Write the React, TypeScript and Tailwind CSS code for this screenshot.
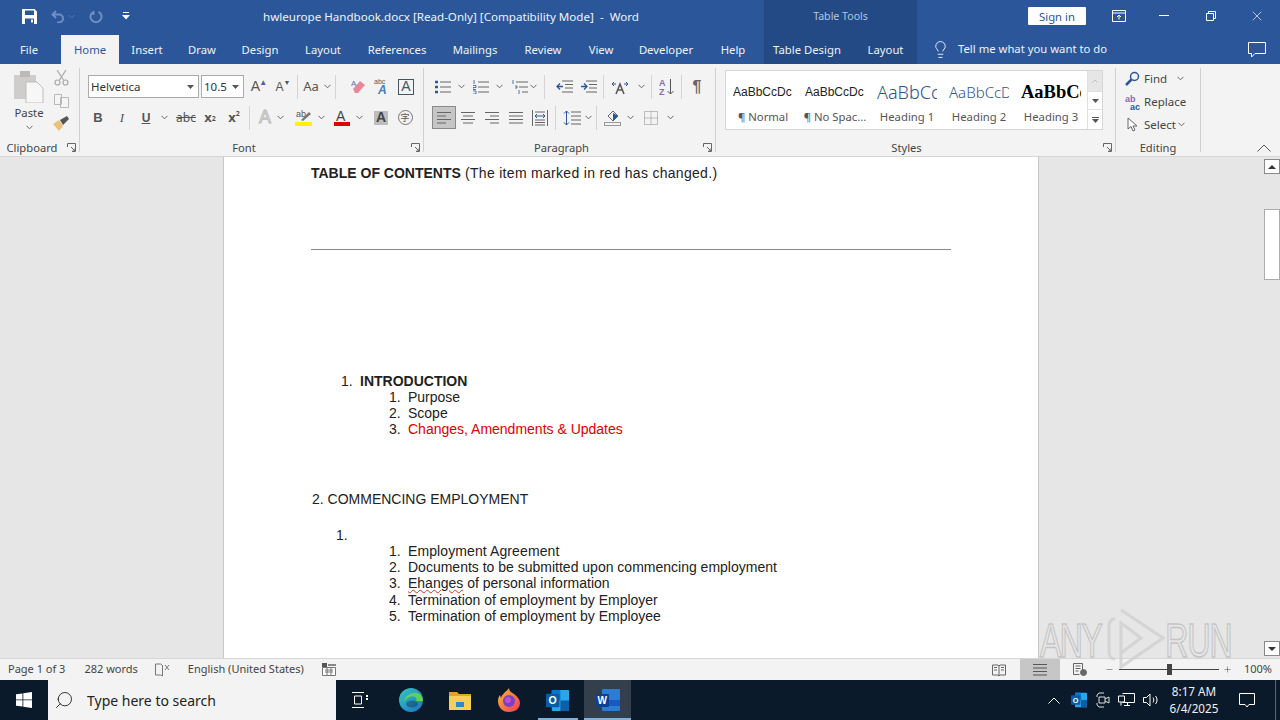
import React from 'react';
import { ChevronUp, Lightbulb, Minus, Plus, Search, X } from 'lucide-react';

const Chev: React.FC<{ className?: string }> = ({ className = 'w-3' }) => (
  <span className={`${className} flex justify-center shrink-0`}>
    <svg width="7" height="5" viewBox="0 0 7 5" fill="none" stroke="#666" strokeWidth="1">
      <path d="M0.5 0.8 3.5 3.8 6.5 0.8" />
    </svg>
  </span>
);

const Sep = ({ className = '' }: { className?: string }) => (
  <span className={`w-px h-[24px] bg-[#d4d4d4] shrink-0 ${className}`} />
);

const GroupSep = () => <div className="w-px my-[4px] bg-[#d0d0d0] shrink-0" />;

const Cell: React.FC<{ children: React.ReactNode; className?: string }> = ({ children, className = '' }) => (
  <span className={`w-6 h-[23px] flex items-center justify-center shrink-0 ${className}`}>{children}</span>
);

const Launcher = () => (
  <svg className="absolute right-[3px] top-[4px]" width="9" height="9" viewBox="0 0 9 9" fill="none" stroke="#666">
    <path d="M.5 4V.5h8v8H5M4 4l4 4M8 5.5V8H5.5" />
  </svg>
);

const GroupLabel: React.FC<{ children: React.ReactNode; className?: string }> = ({ children, className = '' }) => (
  <div className={`relative h-[17px] text-center text-[11.2px] leading-[17px] text-[#444] ${className}`}>
    {children}
    <Launcher />
  </div>
);

const Lines: React.FC<{ rows: [number, number][]; color?: string }> = ({ rows, color = '#666' }) => (
  <svg width="16" height="14" viewBox="0 0 16 14" stroke={color}>
    {rows.map(([x1, x2], i) => (
      <path key={i} d={`M${x1} ${1.5 + i * 3.5}H${x2}`} />
    ))}
  </svg>
);

const titleTabs = [
  { label: 'Insert', w: 'w-[56px]' },
  { label: 'Draw', w: 'w-[54px]' },
  { label: 'Design', w: 'w-[62px]' },
  { label: 'Layout', w: 'w-[64px]' },
  { label: 'References', w: 'w-[84px]' },
  { label: 'Mailings', w: 'w-[72px]' },
  { label: 'Review', w: 'w-[64px]' },
  { label: 'View', w: 'w-[52px]' },
  { label: 'Developer', w: 'w-[78px]' },
  { label: 'Help', w: 'w-[56px]' },
];

const TitleBar = () => (
  <div className="h-[36px] flex bg-[#2b579a] text-white">
    <div className="w-[263px] flex items-center shrink-0">
      <svg className="ml-[22px] mb-[3px]" width="15" height="15" viewBox="0 0 15 15">
        <path fill="#fff" d="M0 0h12.5L15 2.5V15H0z" />
        <path fill="#2b579a" d="M3 1.5h9v4.5H3zM3 9.5h9V15H3z" />
        <path fill="#fff" d="M9 10.5h2v3H9z" />
      </svg>
      <svg className="ml-[14px] mb-[3px]" width="14" height="13" viewBox="0 0 14 13" fill="none" stroke="#6f8fc0" strokeWidth="2">
        <path d="M5 1 1.5 4.5 5 8M2 4.5h6a4 4 0 0 1 0 8H6" />
      </svg>
      <svg className="ml-[3px] mb-[3px]" width="7" height="5" viewBox="0 0 7 5" fill="none" stroke="#5878ad">
        <path d="M.5 1l3 3 3-3" />
      </svg>
      <svg className="ml-[14px] mb-[3px]" width="14" height="14" viewBox="0 0 14 14" fill="none" stroke="#6f8fc0" strokeWidth="2">
        <path d="M9.5 1.8a5.5 5.5 0 1 1-5 0M4.5 1v4" />
      </svg>
      <svg className="ml-[19px] mb-[3px]" width="8" height="9" viewBox="0 0 8 9" fill="#fff">
        <path d="M1 0h6v1H1zM0 3h8L4 7.5z" />
      </svg>
    </div>
    <div className="w-[501px] text-[11.6px] leading-[34px] whitespace-pre shrink-0 text-[#eef2f8]">
      hwleurope Handbook.docx [Read-Only] [Compatibility Mode]  -  Word
    </div>
    <div className="w-[153px] bg-[#234a85] text-center text-[10.6px] leading-[32px] text-[#b4c6e2] shrink-0">Table Tools</div>
    <div className="flex-1 flex items-center">
      <div className="ml-[111px] w-[58px] h-[18px] bg-white text-[#2b579a] text-[11.3px] leading-[19px] text-center rounded-[1px] mb-[4px]">
        Sign in
      </div>
      <svg className="ml-[26px] mb-[5px]" width="14" height="12" viewBox="0 0 14 12" fill="none" stroke="#fff">
        <path d="M.5.5h13v11H.5zM.5 3h13M7 9.5V5M5 7l2-2 2 2" />
      </svg>
      <span className="ml-[33px] w-[10px] h-px bg-white mb-[5px]" />
      <svg className="ml-[37px] mb-[5px]" width="10" height="10" viewBox="0 0 10 10" fill="none" stroke="#fff">
        <path d="M.5 2.5h7v7h-7zM2.5 2.5v-2h7v7h-2" />
      </svg>
      <X className="ml-[33px] mb-[5px] text-white" size={16} strokeWidth={1} />
    </div>
  </div>
);

const TabRow = () => (
  <div className="h-[28px] flex bg-[#2b579a] text-[11.3px] text-[#eef2f8] leading-[28px]">
    <div className="w-[58px] text-center">File</div>
    <div className="ml-[3px] w-[58px] -mt-px bg-[#f3f3f3] text-[#2b579a] text-center leading-[30px]">Home</div>
    {titleTabs.map((t) => (
      <div key={t.label} className={`${t.w} text-center`}>
        {t.label}
      </div>
    ))}
    <div className="ml-[3px] w-[153px] bg-[#234a85] flex">
      <div className="w-[86px] text-center">Table Design</div>
      <div className="ml-[4px] w-[63px] text-center">Layout</div>
    </div>
    <Lightbulb className="ml-[14px] mt-[4px] text-white" size={19} strokeWidth={1.1} />
    <div className="ml-[8px] leading-[26px]">Tell me what you want to do</div>
    <svg className="ml-auto mr-[14px] mt-[6px]" width="18" height="16" viewBox="0 0 18 16" fill="none" stroke="#fff">
      <path d="M.5.5h17v11H7l-3.5 3.5V11.5h-3z" />
    </svg>
  </div>
);

const Clipboard = () => (
  <div className="w-[79px] flex flex-col shrink-0">
    <div className="h-[75px] flex pt-[6px]">
      <div className="w-[58px] flex flex-col items-center">
        <svg width="32" height="33" viewBox="0 0 32 33">
          <rect x="1" y="5" width="22" height="24" fill="#cfcdcb" />
          <rect x="7" y="1" width="10" height="6" fill="#bcbab8" />
          <path d="M13 12h11l6 6v15H13z" fill="#f7f7f7" stroke="#bdbdbd" />
        </svg>
        <div className="text-[11.3px] leading-[16px] text-[#444] mt-[2px]">Paste</div>
        <Chev className="w-3 mt-[4px]" />
      </div>
      <div className="flex flex-col items-center gap-[8px] -ml-[5px]">
        <svg width="15" height="16" viewBox="0 0 15 16" fill="none" stroke="#a8a8a8" strokeWidth="1.2">
          <path d="M3 0l6.5 10M12 0L5.500 10" />
          <circle cx="3.500" cy="12.500" r="2.500" />
          <circle cx="11.500" cy="12.500" r="2.500" />
        </svg>
        <svg width="15" height="14" viewBox="0 0 15 14" fill="#f5f5f5" stroke="#b8b8b8">
          <path d="M.5.5h7v10h-7zM6.500 3.500h8v10h-8z" />
        </svg>
        <svg width="16" height="15" viewBox="0 0 16 15">
          <path d="M0 8l6-4 4 6-4 5z" fill="#e8c27a" />
          <path d="M7 4l7-4 2 3-6 6z" fill="#555" />
        </svg>
      </div>
    </div>
    <GroupLabel className="pr-[15px]">Clipboard</GroupLabel>
  </div>
);

const FontGroup = () => (
  <div className="w-[343px] flex flex-col shrink-0">
    <div className="h-[75px] pt-[11px] text-[#555]">
      <div className="flex items-center h-[23px] pl-[8px]">
        <div className="w-[111px] h-[23px] bg-white border border-[#ababab] flex items-center justify-between px-[2px] text-[11.5px] text-[#333] shrink-0">
          Helvetica
          <svg className="mr-[2px]" width="7" height="4" viewBox="0 0 7 4" fill="#555"><path d="M0 0h7L3.500 4z" /></svg>
        </div>
        <div className="ml-[2px] w-[43px] h-[23px] bg-white border border-[#ababab] flex items-center justify-between px-[2px] text-[11.5px] text-[#333] shrink-0">
          10.5
          <svg className="mr-[2px]" width="7" height="4" viewBox="0 0 7 4" fill="#555"><path d="M0 0h7L3.500 4z" /></svg>
        </div>
        <Cell className="ml-[3px] text-[14px] font-['Liberation_Sans',sans-serif]">
          A<sup className="text-[8px] -ml-[1px] text-[#5a5a9a]">▲</sup>
        </Cell>
        <Cell className="text-[12px] font-['Liberation_Sans',sans-serif]">
          A<sup className="text-[7px] text-[#555]">▼</sup>
        </Cell>
        <Sep className="ml-[2px]" />
        <Cell className="ml-[1px] text-[13px]">Aa</Cell>
        <Chev className="w-3 -ml-[2px]" />
        <Sep className="ml-[2px]" />
        <Cell className="ml-[10px]">
          <svg width="15" height="16" viewBox="0 0 15 16">
            <path d="M2 10l7-8 5 4-7 8H4z" fill="#e8879b" />
            <text x="0" y="7" fontSize="8" fill="#5a6ea8" fontFamily="Liberation Sans">A</text>
          </svg>
        </Cell>
        <Cell>
          <svg width="18" height="18" viewBox="0 0 18 18" className="overflow-visible">
            <text x="1" y="6" fontSize="7" fill="#555" fontFamily="Liberation Sans">abc</text>
            <text x="5" y="16" fontSize="12" fontWeight="700" fontStyle="italic" fill="#3f7fc0" fontFamily="Liberation Sans">A</text>
          </svg>
        </Cell>
        <Cell>
          <span className="w-[16px] h-[16px] border border-[#456] flex items-center justify-center text-[14px] font-['Liberation_Sans',sans-serif] text-[#456]">A</span>
        </Cell>
      </div>
      <div className="flex items-center h-[23px] mt-[8px] pl-[6px] text-[#555]">
        <Cell className="font-bold text-[13px] font-['Liberation_Sans',sans-serif]">B</Cell>
        <Cell className="italic text-[13px] font-['Liberation_Serif',serif]">I</Cell>
        <Cell className="font-bold underline text-[12px] font-['Liberation_Sans',sans-serif]">U</Cell>
        <Chev className="w-3" />
        <Cell className="ml-[4px] line-through text-[12px]">abc</Cell>
        <Cell className="font-bold text-[13px]">x<sub className="text-[7px]">2</sub></Cell>
        <Cell className="font-bold text-[13px]">x<sup className="text-[7px]">2</sup></Cell>
        <Sep className="ml-[3px]" />
        <Cell className="ml-[3px] text-[18px] text-[#e3e3e3] font-['Liberation_Sans',sans-serif] [-webkit-text-stroke:1px_#bdbdbd]">A</Cell>
        <Chev className="w-3 -ml-[3px]" />
        <Cell className="ml-[6px]">
          <svg width="20" height="18" viewBox="0 0 20 18">
            <text x="2" y="8" fontSize="9" fill="#555" fontFamily="Liberation Sans">ab</text>
            <path d="M7 11l8-8 2 2-8 7z" fill="#777" />
            <rect x="1" y="13" width="17" height="4" rx="1" fill="#fff200" />
          </svg>
        </Cell>
        <Chev className="w-3 -ml-[1px]" />
        <Cell className="ml-[3px]">
          <svg width="16" height="17" viewBox="0 0 16 17">
            <text x="2" y="12" fontSize="14" fill="#444" fontFamily="Liberation Sans">A</text>
            <rect x="0" y="13" width="16" height="4" fill="#e00000" />
          </svg>
        </Cell>
        <Chev className="w-3 -ml-[1px]" />
        <Cell className="ml-[4px]">
          <span className="w-[14px] h-[14px] bg-[#bdbdbd] flex items-center justify-center font-bold text-[14px] text-[#444] font-['Liberation_Sans',sans-serif]">A</span>
        </Cell>
        <Cell>
          <span className="w-[15px] h-[15px] rounded-full border border-[#777] flex items-center justify-center text-[9px] text-[#555] font-['Noto_Sans_CJK_SC',sans-serif]">字</span>
        </Cell>
      </div>
    </div>
    <GroupLabel className="pr-[15px]">Font</GroupLabel>
  </div>
);

const ParagraphGroup = () => (
  <div className="w-[291px] flex flex-col shrink-0">
    <div className="h-[75px] pt-[11px]">
      <div className="flex items-center h-[23px] pl-[7px]">
        <Cell>
          <svg width="16" height="14" viewBox="0 0 16 14" stroke="#666">
            <path d="M5 2h11M5 7h11M5 12h11" />
            <path d="M0 2h3M0 7h3M0 12h3" stroke="#2b579a" strokeWidth="2.500" />
          </svg>
        </Cell>
        <Chev className="w-3" />
        <Cell className="ml-[2px]">
          <svg width="16" height="14" viewBox="0 0 16 14" stroke="#666">
            <path d="M5 2h11M5 7h11M5 12h11" />
            <path d="M1 0v4M0 5.500h3v2H0v2h3M0 11h3v3H0" stroke="#2b579a" strokeWidth=".8" fill="none" />
          </svg>
        </Cell>
        <Chev className="w-3" />
        <Cell className="ml-[3px]">
          <svg width="16" height="14" viewBox="0 0 16 14" stroke="#666">
            <path d="M4 2h12M7 7h9M10 12h6" />
            <path d="M1 0v4M3 6h2v2H3M7 10v4" stroke="#2b579a" strokeWidth=".8" fill="none" />
          </svg>
        </Cell>
        <Chev className="w-3 -ml-[5px]" />
        <Sep className="ml-[5px]" />
        <Cell className="ml-[7px]">
          <svg width="17" height="13" viewBox="0 0 17 13" stroke="#666">
            <path d="M6 1h11M9 4.500h8M9 8h8M6 12h11" />
            <path d="M7 6.500H1M4 3.500l-3 3 3 3" stroke="#2b579a" strokeWidth="1.300" fill="none" />
          </svg>
        </Cell>
        <Cell>
          <svg width="17" height="13" viewBox="0 0 17 13" stroke="#666">
            <path d="M6 1h11M9 4.500h8M9 8h8M6 12h11" />
            <path d="M1 6.500h6M4 3.500l3 3-3 3" stroke="#2b579a" strokeWidth="1.300" fill="none" />
          </svg>
        </Cell>
        <Sep className="ml-[3px]" />
        <Cell className="ml-[4px]">
          <svg width="18" height="16" viewBox="0 0 18 16" fill="none">
            <path d="M5 15 9 5l4 10M6.500 11h5" stroke="#555" strokeWidth="1.500" />
            <path d="M1 5h4M1 5l2-2M1 5l2 2M17 5h-4M17 5l-2-2M17 5l-2 2" stroke="#2b579a" />
          </svg>
        </Cell>
        <Chev className="w-3 ml-[3px]" />
        <Sep className="ml-[4px]" />
        <Cell className="ml-[3px]">
          <svg width="16" height="18" viewBox="0 0 16 18">
            <text x="0" y="8" fontSize="9" fontWeight="700" fill="#8a6cb0" fontFamily="Liberation Sans">A</text>
            <text x="0" y="17" fontSize="9" fontWeight="700" fill="#8a6cb0" fontFamily="Liberation Sans">Z</text>
            <path d="M11.500 1v15M8.500 13l3 3 3-3" stroke="#555" fill="none" />
          </svg>
        </Cell>
        <Sep className="ml-[2px]" />
        <Cell className="ml-[3px] text-[16px] font-bold text-[#666] font-['Liberation_Sans',sans-serif]">¶</Cell>
      </div>
      <div className="flex items-center h-[23px] mt-[8px] pl-[8px]">
        <Cell className="bg-[#c6c6c6] border border-[#8a8a8a]">
          <Lines rows={[[1, 15], [1, 10], [1, 15], [1, 10]]} />
        </Cell>
        <Cell>
          <Lines rows={[[1, 15], [3, 13], [1, 15], [3, 13]]} />
        </Cell>
        <Cell>
          <Lines rows={[[1, 15], [6, 15], [1, 15], [6, 15]]} />
        </Cell>
        <Cell>
          <Lines rows={[[1, 15], [1, 15], [1, 15], [1, 15]]} />
        </Cell>
        <Cell>
          <svg width="16" height="16" viewBox="0 0 16 16" fill="none" stroke="#666">
            <path d="M.5 0v16M15.500 0v16M3 2h10M3 10h10M3 12.500h10M3 15h10" />
            <path d="M3 6h10M5 4 3 6l2 2M11 4l2 2-2 2" stroke="#2b579a" />
          </svg>
        </Cell>
        <Sep className="ml-[3px]" />
        <Cell className="ml-[4px]">
          <svg width="18" height="16" viewBox="0 0 18 16" fill="none" stroke="#666">
            <path d="M8 2h10M8 6h10M8 10h10M8 14h10" />
            <path d="M3.500 1v14M1 3.500 3.500 1 6 3.500M1 12.500 3.500 15 6 12.500" stroke="#2b579a" />
          </svg>
        </Cell>
        <Chev className="w-3 -ml-[2px]" />
        <Sep className="ml-[2px]" />
        <Cell className="ml-[4px]">
          <svg width="18" height="17" viewBox="0 0 18 17" fill="none">
            <path d="M4 7l5-5 5 5-5 5z" stroke="#666" />
            <path d="M9 4l5 3-5 5z" fill="#2b579a" />
            <rect x=".5" y="13.500" width="16" height="3" stroke="#999" />
          </svg>
        </Cell>
        <Chev className="w-3 -ml-[1px]" />
        <Cell className="ml-[3px]">
          <svg width="14" height="14" viewBox="0 0 14 14" fill="none" stroke="#888" strokeDasharray="1 1">
            <path d="M.5.5h13v13H.5zM7 .5v13M.5 7h13" />
          </svg>
        </Cell>
        <Chev className="w-3 ml-[1px]" />
      </div>
    </div>
    <GroupLabel className="pr-[16px]">Paragraph</GroupLabel>
  </div>
);

const styleItems = [
  { sample: 'AaBbCcDc', label: '¶ Normal', cls: "text-[12px] text-[#222] font-['Liberation_Sans',sans-serif]" },
  { sample: 'AaBbCcDc', label: '¶ No Spac...', cls: "text-[12px] text-[#222] font-['Liberation_Sans',sans-serif]" },
  { sample: 'AaBbCc', label: 'Heading 1', cls: "text-[18px] font-light text-[#2f5496] font-['Noto_Sans',sans-serif]" },
  { sample: 'AaBbCcD', label: 'Heading 2', cls: "text-[15px] font-light text-[#2f5496] font-['Noto_Sans',sans-serif]" },
  { sample: 'AaBbCc', label: 'Heading 3', cls: "text-[18.5px] font-bold text-black font-['Liberation_Serif',serif]" },
];

const StylesGroup = () => (
  <div className="w-[399px] flex flex-col shrink-0">
    <div className="h-[75px] pt-[6px] pl-[9px]">
      <div className="w-[378px] h-[60px] flex border border-[#d6d6d6] bg-white">
        <div className="w-[361px] flex pl-[1px]">
          {styleItems.map((s) => (
            <div key={s.label} className="w-[72px] flex flex-col items-center overflow-hidden">
              <div className={`h-[36px] w-[60px] overflow-hidden whitespace-nowrap leading-[43px] ${s.cls}`}>{s.sample}</div>
              <div className="text-[11.3px] leading-[16px] mt-[2px] text-[#555] whitespace-nowrap">{s.label}</div>
            </div>
          ))}
        </div>
        <div className="w-[15px] flex flex-col border-l border-[#e0e0e0]">
          <div className="h-[20px] bg-[#e6e6e6] flex items-center justify-center">
            <ChevronUp size={8} className="text-[#aaa]" />
          </div>
          <div className="h-[19px] flex items-center justify-center border-y border-[#e0e0e0]">
            <svg width="7" height="4" viewBox="0 0 7 4" fill="#555"><path d="M0 0h7L3.500 4z" /></svg>
          </div>
          <div className="flex-1 flex flex-col gap-[1px] items-center justify-center">
            <span className="w-[7px] h-px bg-[#555]" />
            <svg width="7" height="4" viewBox="0 0 7 4" fill="#555"><path d="M0 0h7L3.500 4z" /></svg>
          </div>
        </div>
      </div>
    </div>
    <GroupLabel className="pr-[18px]">Styles</GroupLabel>
  </div>
);

const EditingGroup = () => (
  <div className="w-[84px] flex flex-col shrink-0">
    <div className="h-[75px] pl-[9px] pt-[3px] flex flex-col text-[11.5px] text-[#444]">
      <div className="h-[23px] flex items-center">
        <svg width="15" height="15" viewBox="0 0 15 15" fill="none">
          <circle cx="9.500" cy="5.500" r="4" stroke="#2b579a" strokeWidth="1.500" />
          <path d="M6.500 8.500 1 14" stroke="#2b579a" strokeWidth="2.500" />
        </svg>
        <span className="ml-[4px]">Find</span>
        <Chev className="w-3 ml-[7px]" />
      </div>
      <div className="h-[23px] flex items-center">
        <svg width="16" height="16" viewBox="0 0 16 16">
          <text x="0" y="7.500" fontSize="9" fontWeight="700" fill="#8a6cb0" fontFamily="Liberation Sans">ab</text>
          <text x="5" y="15.500" fontSize="9" fontWeight="700" fill="#2b579a" fontFamily="Liberation Sans">ac</text>
        </svg>
        <span className="ml-[3px]">Replace</span>
      </div>
      <div className="h-[23px] flex items-center">
        <svg className="ml-[2px]" width="12" height="15" viewBox="0 0 12 15" fill="#fff" stroke="#666">
          <path d="M1 1v11l3-2.500 2 4.500 2-1-2-4h4z" />
        </svg>
        <span className="ml-[5px]">Select</span>
        <Chev className="w-3" />
      </div>
    </div>
    <div className="h-[17px] text-center text-[11.2px] leading-[17px] text-[#444]">Editing</div>
  </div>
);

const Ribbon = () => (
  <div className="h-[93px] flex bg-[#f3f3f3] border-b border-[#d6d6d6]">
    <Clipboard />
    <GroupSep />
    <FontGroup />
    <GroupSep />
    <ParagraphGroup />
    <GroupSep />
    <StylesGroup />
    <GroupSep />
    <EditingGroup />
    <GroupSep />
    <div className="flex-1 flex items-end justify-end pr-[9px] pb-[4px]">
      <svg width="14" height="8" viewBox="0 0 14 8" fill="none" stroke="#555">
        <path d="M.5 7.500 7 1l6.500 6.500" />
      </svg>
    </div>
  </div>
);

const ListRow: React.FC<{ n: string; children: React.ReactNode; className?: string }> = ({ n, children, className = '' }) => (
  <div className={`flex h-[16px] pl-[78px] ${className}`}>
    <span className="w-[19px]">{n}</span>
    <span>{children}</span>
  </div>
);

const Page = () => (
  <div className="w-[814px] h-full bg-white pl-[87px] pt-[8px] text-[14px] leading-[16px] text-[#222] font-['Liberation_Sans',sans-serif] whitespace-pre overflow-hidden">
    <div className="h-[16px]">
      <span className="font-bold">TABLE OF CONTENTS</span>
      <span className="tracking-[0.3px]"> (The item marked in red has changed.)</span>
    </div>
    <div className="w-[640px] h-px bg-[#8a8a8a] mt-[68px]" />
    <div className="flex h-[16px] mt-[123px] pl-[30px]">
      <span className="w-[19px]">1.</span>
      <span className="font-bold">INTRODUCTION</span>
    </div>
    <ListRow n="1.">Purpose</ListRow>
    <ListRow n="2.">Scope</ListRow>
    <ListRow n="3.">
      <span className="text-[#e00000]">Changes, Amendments &amp; Updates</span>
    </ListRow>
    <div className="h-[16px] mt-[54px] pl-px">2. COMMENCING EMPLOYMENT</div>
    <div className="h-[16px] mt-[20px] pl-[25px]">1.</div>
    <ListRow n="1.">
      <span className="tracking-[0.1px]">Employment Agreement</span>
    </ListRow>
    <ListRow n="2.">Documents to be submitted upon commencing employment</ListRow>
    <ListRow n="3.">
      <span className="underline decoration-wavy decoration-[#d03030] decoration-1 underline-offset-1">Ehanges</span> of personal information
    </ListRow>
    <ListRow n="4." className="mt-px">Termination of employment by Employer</ListRow>
    <ListRow n="5.">Termination of employment by Employee</ListRow>
  </div>
);

const Scrollbar = () => (
  <div className="w-[16px] flex flex-col items-center pt-[2px] pb-[2px]">
    <div className="w-[16px] h-[15px] bg-white border border-[#8a8a8a] flex items-center justify-center">
      <svg width="8" height="4" viewBox="0 0 8 4" fill="#333"><path d="M0 4h8L4 0z" /></svg>
    </div>
    <div className="w-[16px] h-[71px] bg-white border border-[#ababab] mt-[35px]" />
    <div className="flex-1" />
    <div className="w-[16px] h-[15px] bg-white border border-[#8a8a8a] flex items-center justify-center">
      <svg width="8" height="4" viewBox="0 0 8 4" fill="#333"><path d="M0 0h8L4 4z" /></svg>
    </div>
  </div>
);

const Watermark = () => (
  <div className="absolute z-10 left-[1040px] top-[450px] w-[195px] h-[66px] flex items-center text-[32px] leading-none text-transparent font-['Liberation_Sans',sans-serif] [-webkit-text-stroke:1px_rgba(185,185,185,0.75)]">
    <span className="tracking-[-1.5px] scale-y-150 shrink-0">ANY</span>
    <svg className="ml-[6px] -mt-[4px] shrink-0" width="58" height="62" viewBox="0 0 58 62" fill="none" stroke="rgba(205,205,205,0.75)" strokeWidth="3">
      <path d="M8 12C3 12 2 16 2 20v24c0 6 2 8 6 8M14 3l42 28-42 29V16l20 15-20 15" />
    </svg>
    <span className="tracking-[-1px] scale-y-150 shrink-0">RUN</span>
  </div>
);

const DocArea = () => (
  <div className="relative flex-1 min-h-0 flex bg-[#e6e6e6]">
    <div className="w-[224px] shrink-0" />
    <div className="h-full border-x border-[#c6c6c6] -mx-px shrink-0">
      <Page />
    </div>
    <div className="flex-1" />
    <Scrollbar />
    <Watermark />
  </div>
);

const StatusBar = () => (
  <div className="h-[22px] flex items-center bg-[#f3f3f3] border-t border-[#d6d6d6] text-[11px] text-[#444]">
    <span className="ml-[8px]">Page 1 of 3</span>
    <span className="ml-[19px]">282 words</span>
    <svg className="ml-[17px]" width="15" height="14" viewBox="0 0 15 14" fill="none" stroke="#777">
      <path d="M.5 1h5l2 1.500V13l-2-1H.5zM7.500 2.500V13" />
      <path d="M10 2l4 5M14 2l-4 5" stroke="#777" />
    </svg>
    <span className="ml-[18px]">English (United States)</span>
    <svg className="ml-[18px]" width="14" height="13" viewBox="0 0 14 13">
      <rect x="0" y="0" width="5" height="4" fill="#555" />
      <rect x="6" y="1" width="8" height="2" fill="#888" />
      <path d="M.5 4.500h13v8H.5zM3 7h8M3 9h8M5 4.500v8M9 4.500v8" fill="#fff" stroke="#777" />
    </svg>
    <div className="ml-auto flex items-center h-full">
      <svg width="14" height="12" viewBox="0 0 14 12" fill="none" stroke="#666">
        <path d="M.5 1h5.500L7 2l1-1h5.500v10H8l-1 1-1-1H.5zM7 2v9M2 3.500h3M2 6h3M9 3.500h3M9 6h3" />
      </svg>
      <div className="ml-[14px] w-[40px] h-full bg-[#c6c6c6] flex items-center justify-center">
        <Lines rows={[[1, 15], [1, 15], [1, 15], [1, 15]]} color="#555" />
      </div>
      <svg className="ml-[13px]" width="14" height="13" viewBox="0 0 14 13" fill="none" stroke="#666">
        <path d="M.5.500h9v9M.5.500v11h6M2.500 3h5M2.500 5.500h5M2.500 8h3" />
        <circle cx="10.500" cy="9.500" r="3" fill="#666" />
      </svg>
      <Minus className="ml-[18px] text-[#555]" size={9} strokeWidth={1.5} />
      <div className="relative ml-[5px] w-[100px] h-px bg-[#444]">
        <span className="absolute left-[48px] -top-[5px] w-[5px] h-[11px] bg-[#444]" />
      </div>
      <Plus className="ml-[4px] text-[#555]" size={9} strokeWidth={1.5} />
      <span className="ml-[12px] mr-[8px]">100%</span>
    </div>
  </div>
);

function OutlookIcon({ small = false }: { small?: boolean }) {
  const size = small ? 16 : 23;
  return (
    <svg width={size} height={size} viewBox="0 0 24 24">
      <rect x="6" y="1" width="18" height="22" rx="1" fill="#28a8ea" />
      <rect x="6" y="1" width="9" height="11" fill="#0078d4" />
      <rect x="15" y="12" width="9" height="11" fill="#0f5ea8" />
      <rect x="0" y="5" width="14" height="14" rx="1" fill="#0a5ca8" />
      <text x="2.500" y="16" fontSize="11" fontWeight="700" fill="#fff" fontFamily="Liberation Sans">O</text>
    </svg>
  );
}

const Taskbar = () => (
  <div className="h-[40px] flex items-center bg-[#0b1a2a] text-white">
    <div className="w-[48px] flex justify-center">
      <svg width="16" height="16" viewBox="0 0 16 16" fill="#fff">
        <path d="M0 2.300 6.500 1.400V7.500H0zM7.300 1.300 16 0V7.500H7.300zM0 8.300H6.500V14.600L0 13.700zM7.300 8.300H16V16L7.300 14.700z" />
      </svg>
    </div>
    <div className="w-[288px] h-full bg-[#f3f3f3] flex items-center text-[#222] text-[14px]">
      <Search className="ml-[6px] -scale-x-100 text-[#222]" size={20} strokeWidth={1.1} />
      <span className="ml-[13px]">Type here to search</span>
    </div>
    <div className="w-[48px] flex justify-center">
      <svg width="16" height="16" viewBox="0 0 16 16" fill="none" stroke="#fff">
        <path d="M0 .5h12M0 15.500h12M2.500 4h7v8h-7z" />
        <path d="M14 4h2M14 7h2" strokeWidth="2" />
      </svg>
    </div>
    <div className="w-[50px] flex justify-center ml-[2px]">
      <svg width="24" height="24" viewBox="0 0 24 24">
        <defs>
          <linearGradient id="edgeA" x1="0" y1="0" x2="1" y2="1">
            <stop offset="0" stopColor="#36c6c0" />
            <stop offset="1" stopColor="#1a70c8" />
          </linearGradient>
        </defs>
        <circle cx="12" cy="12" r="12" fill="url(#edgeA)" />
        <path d="M24 13c0-7-6-9-10-8-6 1-9 5-9 9 3-5 8-7 11-5 2 1 2 3 1 4h7z" fill="#5ed05c" />
        <ellipse cx="13" cy="16" rx="6" ry="3.500" fill="#0b1a2a" opacity=".35" />
      </svg>
    </div>
    <div className="w-[48px] flex justify-center">
      <svg width="22" height="20" viewBox="0 0 22 20">
        <path d="M0 2h8l2 2h12v4H0z" fill="#e0a526" />
        <rect x="0" y="6" width="22" height="14" fill="#f6cf55" />
        <rect x="7" y="12" width="8" height="5" fill="#2f87c8" />
      </svg>
    </div>
    <div className="w-[50px] flex justify-center">
      <svg width="22" height="24" viewBox="0 0 22 24">
        <defs>
          <linearGradient id="foxA" x1="0" y1="0" x2="1" y2="1">
            <stop offset="0" stopColor="#ffbd2e" />
            <stop offset="1" stopColor="#f0385a" />
          </linearGradient>
        </defs>
        <path d="M11 24C4 24 0 19 0 13c0-3 1-5 2-6l1 3c1-4 5-6 8-10 0 3 2 4 5 6 4 3 6 6 6 9 0 5-4 9-11 9z" fill="url(#foxA)" />
        <circle cx="11" cy="13" r="6" fill="#7b3fc4" />
        <circle cx="10" cy="12" r="3" fill="#c04fc8" />
      </svg>
    </div>
    <div className="relative w-[50px] h-full flex items-center justify-center pr-[3px]">
      <OutlookIcon />
      <span className="absolute left-[4px] right-[6px] bottom-0 h-[2px] bg-[#7db2dc]" />
    </div>
    <div className="relative w-[47px] h-full bg-[#333f4c] flex items-center justify-center">
      <svg width="24" height="22" viewBox="0 0 24 22">
        <rect x="6" y="0" width="18" height="22" rx="1" fill="#2b7cd3" />
        <rect x="6" y="11" width="18" height="6" fill="#185abd" />
        <rect x="0" y="5" width="13" height="13" rx="1" fill="#103f91" />
        <text x="1.500" y="15" fontSize="10" fontWeight="700" fill="#fff" fontFamily="Liberation Sans">W</text>
      </svg>
      <span className="absolute left-0 right-0 bottom-0 h-[2px] bg-[#7db2dc]" />
    </div>
    <div className="ml-auto flex items-center h-full">
      <svg width="12" height="7" viewBox="0 0 12 7" fill="none" stroke="#fff">
        <path d="M.5 6.500 6 1l5.500 5.500" />
      </svg>
      <span className="ml-[11px] flex"><OutlookIcon small /></span>
      <svg className="ml-[9px]" width="14" height="16" viewBox="0 0 14 16" fill="none" stroke="#ddd">
        <path d="M1 5V3l2-2h5M1 11v2l2 2h5M3 5h6v6H3zM9 7l4-2v6l-4-2" />
      </svg>
      <svg className="ml-[8px]" width="17" height="14" viewBox="0 0 17 14" fill="none" stroke="#fff">
        <path d="M4.500.5h12v9h-12M.5 3h6v6h-6zM3 9v3.500M6 12.500H12M9.500 9.500v3" />
      </svg>
      <svg className="ml-[8px]" width="16" height="14" viewBox="0 0 16 14" fill="none" stroke="#fff">
        <path d="M.5 4.500h3L7 1v12L3.500 9.500h-3zM10 4.500c1 1.500 1 3.500 0 5M12.500 3c2 2.500 2 5.500 0 8" />
      </svg>
      <div className="ml-[7px] w-[56px] text-center text-[11.7px] leading-[17px] text-[#f0f0f0]">
        <div>8:17 AM</div>
        <div>6/4/2025</div>
      </div>
      <svg className="ml-[17px]" width="16" height="15" viewBox="0 0 16 15" fill="none" stroke="#fff">
        <path d="M.5.500h15v11H10l-2 2.500-2-2.500H.5z" />
      </svg>
      <span className="ml-[20px] mr-[4px] w-px h-full bg-[#5a6470]" />
    </div>
  </div>
);

export default function App() {
  return (
    <div className="w-[1280px] h-[720px] flex flex-col overflow-hidden font-['Noto_Sans',sans-serif]">
      <TitleBar />
      <TabRow />
      <Ribbon />
      <DocArea />
      <StatusBar />
      <Taskbar />
    </div>
  );
}
